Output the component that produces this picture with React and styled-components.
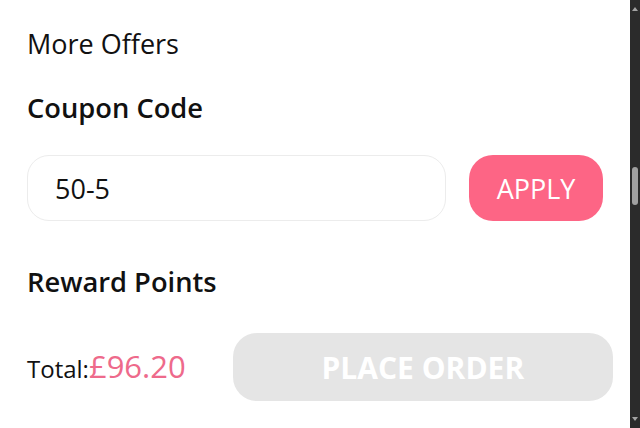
import React from "react";
import styled, { createGlobalStyle } from "styled-components";

const Global = createGlobalStyle`
  html, body { margin: 0; padding: 0; background: #ffffff; overflow: hidden; }
  * { box-sizing: border-box; }
`;

const Page = styled.div`
  display: flex;
  width: 640px;
  height: 428px;
  font-family: "Open Sans", "Noto Sans", sans-serif;
  color: #111;
  background: #fff;
`;

const Content = styled.main`
  flex: 1;
  min-width: 0;
  display: flex;
  flex-direction: column;
  padding: 26px 27px 0 27px;
`;

const Heading = styled.h2`
  margin: ${(p) => p.$mt || 0}px 0 0 0;
  font-size: ${(p) => (p.$bold ? 27.3 : 27)}px;
  font-weight: ${(p) => (p.$bold ? 600 : 400)};
  line-height: 36px;
  color: #111;
`;

const CouponRow = styled.div`
  display: flex;
  gap: 23px;
  margin-top: 29px;
`;

const CodeInput = styled.div`
  flex: 1;
  height: 66px;
  display: flex;
  align-items: center;
  padding-left: 27px;
  border: 1px solid #ececec;
  border-radius: 22px;
  font-size: 27px;
  color: #111;
`;

const ApplyButton = styled.button`
  width: 134px;
  height: 66px;
  border: none;
  border-radius: 24px;
  background: #fd6585;
  color: #fff;
  font-family: inherit;
  font-size: 27px;
  font-weight: 400;
  padding: 0;
`;

const TotalRow = styled.div`
  display: flex;
  align-items: center;
  gap: 47px;
  margin-top: 33px;
  margin-right: -10px;
`;

const TotalText = styled.div`
  font-size: 24px;
  line-height: 42px;
  color: #111;
  white-space: nowrap;
`;

const Amount = styled.span`
  font-size: 31px;
  color: #ee6a8b;
`;

const OrderButton = styled.button`
  flex: 1;
  height: 68px;
  border: none;
  border-radius: 24px;
  background: #e5e5e5;
  color: #fff;
  font-family: inherit;
  font-size: 30px;
  font-weight: 700;
  padding: 0;
`;

const Scrollbar = styled.div`
  flex: none;
  width: 10px;
  height: 428px;
  background: #2b2b2b;
  display: flex;
  flex-direction: column;
  align-items: center;
  justify-content: space-between;
  padding: 7px 0;
`;

const Track = styled.div`
  flex: 1;
  width: 100%;
  display: flex;
  justify-content: center;
  padding-top: 156px;
`;

const Thumb = styled.div`
  width: 6px;
  height: 38px;
  border-radius: 3px;
  background: #a0a0a0;
`;

const Arrow = ({ down }) => (
  <svg width="6" height="4" viewBox="0 0 6 4">
    <path d={down ? "M0 0H6L3 4Z" : "M0 4H6L3 0Z"} fill="#a3a3a3" />
  </svg>
);

export default function App() {
  return (
    <>
      <Global />
      <Page>
        <Content>
          <Heading>More Offers</Heading>
          <Heading $bold $mt={28}>Coupon Code</Heading>
          <CouponRow>
            <CodeInput>50-5</CodeInput>
            <ApplyButton>APPLY</ApplyButton>
          </CouponRow>
          <Heading $bold $mt={43}>Reward Points</Heading>
          <TotalRow>
            <TotalText>
              Total:<Amount>£96.20</Amount>
            </TotalText>
            <OrderButton>PLACE ORDER</OrderButton>
          </TotalRow>
        </Content>
        <Scrollbar>
          <Arrow />
          <Track>
            <Thumb />
          </Track>
          <Arrow down />
        </Scrollbar>
      </Page>
    </>
  );
}
